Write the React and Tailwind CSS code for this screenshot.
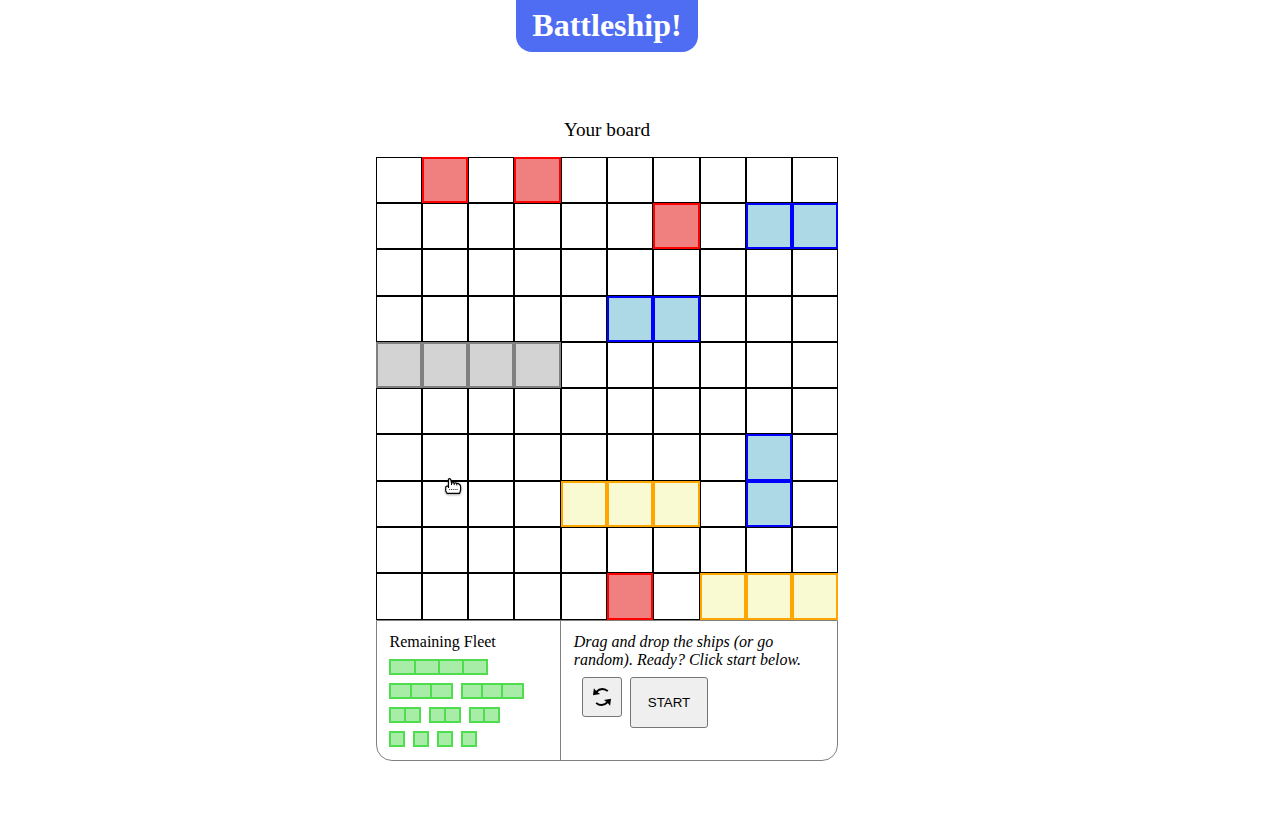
import React from "react";

const BOARD = [
  ".R.R......",
  "......R.BB",
  "..........",
  ".....BB...",
  "GGGG......",
  "..........",
  "........B.",
  "....YYY.B.",
  "..........",
  ".....R.YYY",
];

const CELL = {
  ".": "border border-black",
  R: "border-2 border-[#ff0000] bg-[#f08080]",
  B: "border-2 border-[#0000ff] bg-[#add8e6]",
  G: "border-2 border-[#808080] bg-[#d3d3d3]",
  Y: "border-2 border-[#ffa500] bg-[#fafad2]",
};

// Each ship is a list of segment widths in pixels.
const FLEET = [
  [[25, 24, 24, 26]],
  [[21, 20, 23], [20, 20, 23]],
  [[15, 17], [15, 17], [14, 17]],
  [[16], [16], [16], [16]],
];

function Ship({ segments }) {
  return (
    <div className="flex h-4 border-r-2 border-[#4fdc4f]">
      {segments.map((w, i) => (
        <div
          key={i}
          className="h-4 border-y-2 border-l-2 border-[#4fdc4f] bg-[#a7eca7]"
          style={{ width: i === segments.length - 1 ? w - 2 : w }}
        />
      ))}
    </div>
  );
}

function SwapIcon() {
  return (
    <svg width="20" height="20" viewBox="0 0 20 20" fill="none">
      <path d="M15.8 4.2C12.8 1.2 7.8 1 4.4 4.8" stroke="black" strokeWidth="1.9" />
      <path d="M1.9 1.2L1 8.2L8.1 6.9L5.6 5.3L3.8 3.6Z" fill="black" />
      <path d="M4.2 15.8C7.2 18.8 12.2 19 15.6 15.2" stroke="black" strokeWidth="1.9" />
      <path d="M19 11.8L11.9 13.1L14.4 14.7L16.2 16.4L18.1 18.8Z" fill="black" />
    </svg>
  );
}

function HandCursor() {
  return (
    <svg
      className="absolute left-[445px] top-[478px] drop-shadow-[0_1px_1px_rgba(0,0,0,0.35)]"
      width="17"
      height="17"
      viewBox="0 0 17 17"
    >
      <path
        d="M3.5 8V1.8Q3.5 .6 4.5 .6Q5.6 .6 5.8 1.8L6.6 5Q8.4 4.1 9.2 5.2Q11 4.5 11.8 5.6Q13.4 5 14.3 6.4Q15.6 7 15.6 8.8V12L14.6 15.3H2L.7 13V9.6Q.7 8.2 2.1 8.2H3.5V10"
        fill="white"
        stroke="black"
        strokeWidth="1.2"
        strokeLinejoin="round"
      />
      <path d="M6.5 5V7M9.2 5.2V7.2M11.8 5.6V7.4" stroke="black" fill="none" />
      <path d="M4 11.5H13" stroke="#444" strokeDasharray="1.2 .9" />
    </svg>
  );
}

export default function App() {
  return (
    <div className="relative h-[824px] overflow-hidden bg-white font-['Liberation_Serif',serif] text-black">
      <div className="flex w-[1214px] flex-col items-center">
        <h1 className="flex h-[52px] w-[182px] items-center justify-center rounded-b-2xl bg-[#4e6df3] pb-[3px] text-[32px] leading-[36px] font-bold text-white">
          Battleship!
        </h1>
        <h2 className="mt-[67px] text-[19.2px] leading-[22px]">Your board</h2>
      </div>
      <div className="ml-[375.67px] mt-[15.84px] grid h-[462.7px] w-[462.7px] grid-cols-10 grid-rows-10">
        {BOARD.flatMap((row, y) =>
          [...row].map((c, x) => <div key={`${y}-${x}`} className={CELL[c]} />)
        )}
      </div>
      <div className="ml-[376px] mt-[0.46px] flex h-[141px] w-[462px] rounded-b-2xl border border-[#808080]">
        <section className="w-[184px] border-r border-[#808080] pl-3 pt-3">
          <h3 className="ml-[0.6px] text-base leading-[18px]">Remaining Fleet</h3>
          <div className="mt-2 flex flex-col gap-2">
            {FLEET.map((ships, i) => (
              <div key={i} className="flex gap-2">
                {ships.map((s, j) => (
                  <Ship key={j} segments={s} />
                ))}
              </div>
            ))}
          </div>
        </section>
        <section className="flex-1 pl-[12.8px] pt-3">
          <p className="w-[240px] text-base leading-[18px] italic">
            Drag and drop the ships (or go random). Ready? Click start below.
          </p>
          <div className="ml-[8.2px] mt-2 flex items-start gap-2">
            <button className="flex h-10 w-10 items-center justify-center rounded-[3px] border border-[#767676] bg-[#efefef]">
              <SwapIcon />
            </button>
            <button className="h-[51px] w-[78px] rounded-[3px] border border-[#767676] bg-[#efefef] pt-0.5 font-['Liberation_Sans',sans-serif] text-[13.333px]">
              START
            </button>
          </div>
        </section>
      </div>
      <HandCursor />
    </div>
  );
}
